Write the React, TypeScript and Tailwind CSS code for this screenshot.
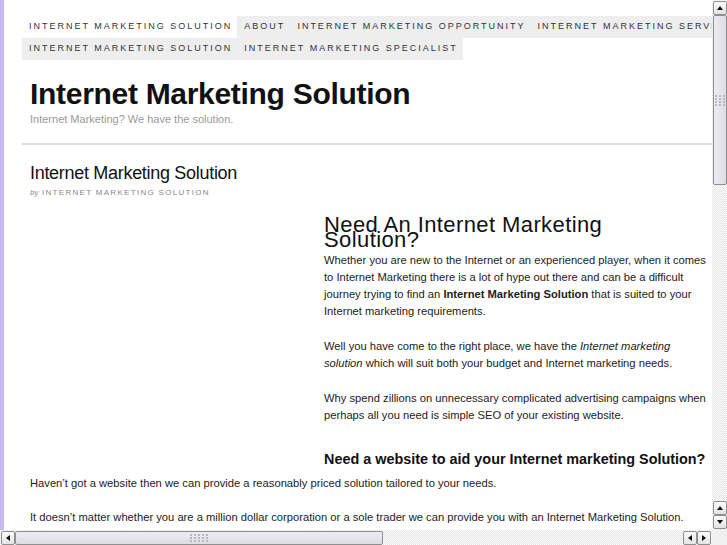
import React from "react"

const navRow1 = ["Internet Marketing Solution", "About", "Internet Marketing Opportunity", "Internet Marketing Services"]
const navRow2 = ["Internet Marketing Solution", "Internet Marketing Specialist"]

function Arrow({ dir }: { dir: "up" | "down" | "left" | "right" }) {
  const pts = {
    up: "1,6 4,2 7,6",
    down: "1,2 4,6 7,2",
    left: "6,1 2,4 6,7",
    right: "2,1 6,4 2,7",
  }[dir]
  return (
    <div className="w-[14px] h-[14px] flex items-center justify-center border border-[#8f8f8f] rounded-[2px] bg-gradient-to-b from-[#fbfbfb] to-[#e3e3e6]">
      <svg width="8" height="8" viewBox="0 0 8 8">
        <polygon points={pts} fill="#111" />
      </svg>
    </div>
  )
}

function Grip({ cols, rows }: { cols: number; rows: number }) {
  const dots = []
  for (let r = 0; r < rows; r++) {
    for (let c = 0; c < cols; c++) {
      dots.push(<rect key={`${r}-${c}`} x={c * 4} y={r * 3} width="2" height="2" fill="#b9b9c2" />)
    }
  }
  return (
    <svg width={cols * 4 - 2} height={rows * 3 - 1}>
      {dots}
    </svg>
  )
}

const track = "bg-[repeating-conic-gradient(#e2e2e2_0%_25%,#ffffff_0%_50%)] bg-[length:2px_2px]"

export default function App() {
  return (
    <div className="w-[727px] h-[545px] overflow-hidden flex flex-col bg-white font-['Liberation_Sans',Arial,sans-serif]">
      <div className="flex h-[530px]">
        <div className="w-[4px] bg-[#c9b7f1]" />

        <div className="flex-1 overflow-hidden">
          <div className="w-[1280px] pl-[18px] pt-4">
            <ul className="w-[900px] flex flex-wrap">
              {navRow1.map((item, i) => (
                <li
                  key={i}
                  className={`h-[22px] flex items-center pl-[7px] pr-[5px] text-[9px] tracking-[2px] uppercase text-[#333] ${i === 0 ? "bg-white" : "bg-[#eeeeee]"}`}
                >
                  {item}
                </li>
              ))}
              {navRow2.map((item, i) => (
                <li
                  key={`b${i}`}
                  className="h-[22px] flex items-center pl-[7px] pr-[5px] text-[9px] tracking-[2px] uppercase text-[#333] bg-[#eeeeee]"
                >
                  {item}
                </li>
              ))}
            </ul>

            <div className="pl-2 pt-[16px]">
              <h1 className="text-[30px] leading-[36px] font-bold tracking-[-0.3px] text-[#111]">
                Internet Marketing Solution
              </h1>
              <p className="text-[11px] leading-[14px] text-[#999]">
                Internet Marketing? We have the solution.
              </p>
            </div>

            <div className="w-[900px] h-[2px] bg-[#dddddd] mt-[17px]" />

            <div className="w-[687px] pl-2 pt-[17px] text-[#222]">
              <h2 className="text-[18px] leading-[22px] tracking-[-0.3px] text-[#111]">
                Internet Marketing Solution
              </h2>
              <div className="text-[8px] leading-[12px] tracking-[1.3px] uppercase text-[#888] mt-[3px]">
                <span className="italic normal-case tracking-normal">by</span> Internet Marketing Solution
              </div>

              <div className="flex mt-[17px]">
                <div className="w-[294px] shrink-0" />
                <div className="flex-1 text-[11.2px] leading-[17px]">
                  <h3 className="max-w-[340px] text-[22px] leading-[15px] tracking-[0.4px] text-[#111] mt-[1px] mb-[5px]">
                    Need An Internet Marketing Solution?
                  </h3>
                  <p>
                    Whether you are new to the Internet or an experienced player, when it comes to Internet
                    Marketing there is a lot of hype out there and can be a difficult journey trying to find an{" "}
                    <strong>Internet Marketing Solution</strong> that is suited to your Internet marketing
                    requirements.
                  </p>
                  <p className="mt-[18px]">
                    Well you have come to the right place, we have the <em>Internet marketing solution</em> which
                    will suit both your budget and Internet marketing needs.
                  </p>
                  <p className="mt-[18px]">
                    Why spend zillions on unnecessary complicated advertising campaigns when perhaps all you need
                    is simple SEO of your existing website.
                  </p>
                  <h4 className="text-[14.4px] leading-[18px] font-bold text-[#111] mt-[26px]">
                    Need a website to aid your Internet marketing Solution?
                  </h4>
                </div>
              </div>

              <div className="text-[11.2px] leading-[17px] mt-[7px]">
                <p>Haven’t got a website then we can provide a reasonably priced solution tailored to your needs.</p>
                <p className="mt-[17px]">
                  It doesn’t matter whether you are a million dollar corporation or a sole trader we can provide you
                  with an Internet Marketing Solution.
                </p>
              </div>
            </div>
          </div>
        </div>

        <div className={`w-[15px] flex flex-col items-center ${track}`}>
          <div className="w-[15px] flex justify-center pt-[1px]">
            <Arrow dir="up" />
          </div>
          <div className="w-[14px] h-[170px] border border-[#8f8f8f] rounded-[2px] bg-gradient-to-r from-[#ededf1] to-[#dcdce3] flex items-center justify-center">
            <Grip cols={3} rows={4} />
          </div>
          <div className="flex-1" />
          <Arrow dir="up" />
          <Arrow dir="down" />
          <div className="h-[1px]" />
        </div>
      </div>

      <div className={`h-[15px] flex items-center ${track}`}>
        <div className="pl-[1px]">
          <Arrow dir="left" />
        </div>
        <div className="w-[368px] h-[14px] border border-[#8f8f8f] rounded-[2px] bg-gradient-to-b from-[#ededf1] to-[#dcdce3] flex items-center justify-center">
          <Grip cols={5} rows={3} />
        </div>
        <div className="flex-1" />
        <Arrow dir="left" />
        <Arrow dir="right" />
        <div className="w-[16px] h-[15px] bg-[#f0f0f0]" />
      </div>
    </div>
  )
}
